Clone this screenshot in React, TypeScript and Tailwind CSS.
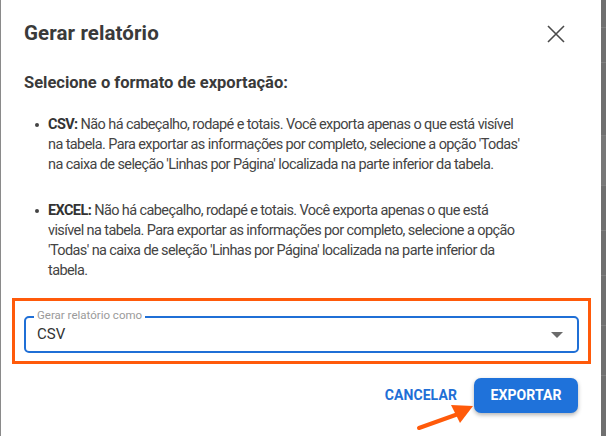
import React from "react";

export default function App() {
  return (
    <div className="flex h-[436px] w-[606px] overflow-hidden bg-[#707070]" style={{ fontFamily: "Roboto, 'Liberation Sans', sans-serif" }}>
      <div className="relative flex h-full w-[601px] shrink-0 flex-col border-l border-[#8a8a8a] bg-white">
        <div className="flex items-center justify-between pl-[23px] pr-[36px] pt-[20px]">
          <h1 className="text-[20.5px] font-bold leading-[26px] tracking-[0.1px] text-[#3a3a3a]">Gerar relatório</h1>
          <svg width="18" height="18" viewBox="0 0 18 18" className="mt-[1px]">
            <path d="M1 1 L17 17 M17 1 L1 17" stroke="#4a4a4a" strokeWidth="1.6" />
          </svg>
        </div>
        <div className="pl-[23px] pt-[26px] text-[16.5px] font-bold leading-[22px] text-[#3a3a3a]">
          Selecione o formato de exportação:
        </div>
        <ul className="mt-[21px] flex flex-col gap-[26px] pl-[47px] text-[14.5px] leading-[20px] tracking-[-0.6px] text-[#444]">
          <li className="relative whitespace-nowrap">
            <span className="absolute left-[-13px] top-[8px] h-[4px] w-[4px] rounded-full bg-[#444]" />
            <b className="font-bold text-[#333]">CSV:</b> Não há cabeçalho, rodapé e totais. Você exporta apenas o que está visível
            <br />
            na tabela. Para exportar as informações por completo, selecione a opção 'Todas'
            <br />
            na caixa de seleção 'Linhas por Página' localizada na parte inferior da tabela.
          </li>
          <li className="relative whitespace-nowrap">
            <span className="absolute left-[-13px] top-[8px] h-[4px] w-[4px] rounded-full bg-[#444]" />
            <b className="font-bold text-[#333]">EXCEL:</b> Não há cabeçalho, rodapé e totais. Você exporta apenas o que está
            <br />
            visível na tabela. Para exportar as informações por completo, selecione a opção
            <br />
            'Todas' na caixa de seleção 'Linhas por Página' localizada na parte inferior da
            <br />
            tabela.
          </li>
        </ul>
        <div className="ml-[11px] mt-[17px] w-[579px] border-[3px] border-[#ff5a0a] px-[9px] pb-[8px] pt-[15px]">
          <div className="relative flex h-[37px] items-center justify-between rounded-[5px] border-2 border-[#1f6fd6] pl-[11px] pr-[14px]">
            <span className="absolute left-[8px] top-[-10px] bg-white px-[3px] text-[11.5px] leading-[14px] text-[#9a9a9a]">Gerar relatório como</span>
            <span className="text-[15px] text-[#333]">CSV</span>
            <svg width="12" height="6" viewBox="0 0 12 6">
              <path d="M0 0 L12 0 L6 6 Z" fill="#6b6b6b" />
            </svg>
          </div>
        </div>
        <div className="mt-[14px] flex items-center justify-end gap-[17px] pr-[23px]">
          <span className="text-[14px] font-bold tracking-[0.1px] text-[#1f6fd6]">CANCELAR</span>
          <div className="flex h-[35px] w-[104px] items-center justify-center rounded-[7px] bg-[#1f72da] text-[14px] font-bold tracking-[0.1px] text-white shadow-[0_2px_4px_rgba(0,0,0,0.3)]">
            EXPORTAR
          </div>
        </div>
        <svg className="absolute left-[414px] top-[396px]" width="64" height="36" viewBox="0 0 64 36">
          <path d="M4 32 L46 17" stroke="#ff5a0a" strokeWidth="4" strokeLinecap="round" />
          <path d="M36 9 L58 10 L45 27 Z" fill="#ff5a0a" />
        </svg>
      </div>
      <div className="flex flex-1 flex-col">
        <div className="h-[27px]" />
        <div className="h-[35px] border-t border-[#808080]" />
        <div className="h-[73px] border-t border-[#808080]" />
        <div className="h-[50px] border-t border-[#808080] bg-[#787878]" />
        <div className="h-[45px] border-t border-[#808080]" />
        <div className="h-[45px] border-t border-[#808080]" />
        <div className="h-[50px] border-t border-[#808080]" />
        <div className="h-[50px] border-t border-[#808080]" />
        <div className="h-[50px] border-t border-[#808080]" />
      </div>
    </div>
  );
}
